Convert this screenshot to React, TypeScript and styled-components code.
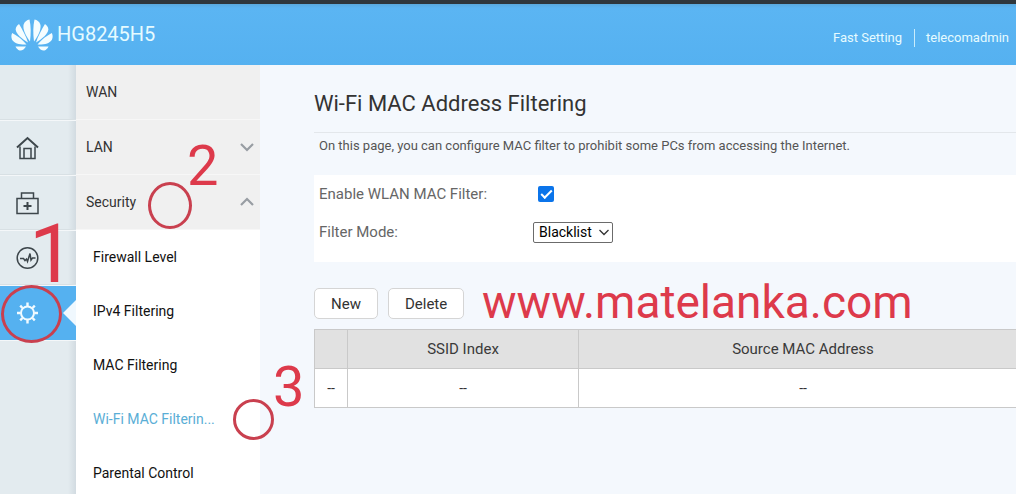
import React from 'react';
import styled, { createGlobalStyle, css } from 'styled-components';

const GlobalStyle = createGlobalStyle`
  *, *::before, *::after { box-sizing: border-box; }
  body {
    margin: 0;
    font-family: Roboto, "Liberation Sans", sans-serif;
    font-size: 14px;
    color: #333;
    background: #f4f8fd;
    overflow: hidden;
  }
  a { color: inherit; text-decoration: none; }
`;

const Page = styled.div`
  position: relative;
  display: flex;
  flex-direction: column;
  min-height: 100vh;
  overflow: hidden;
`;

const StatusStrip = styled.div`
  height: 4px;
  background: #2f373d;
`;

const Header = styled.header`
  display: flex;
  align-items: center;
  justify-content: space-between;
  height: 61px;
  padding: 0 7px 0 11px;
  color: #e6fbff;
  background: linear-gradient(#5aa9de 0, #5bb5f3 4px, #55b1f0 100%);
`;

const Brand = styled.div`
  display: flex;
  align-items: center;
  gap: 4px;
  padding-top: 2px;
  font-size: 20px;
  line-height: 24px;
`;

const BrandName = styled.span`
  padding-bottom: 4px;
`;

const UserNav = styled.nav`
  display: flex;
  align-items: center;
  font-size: 13px;
  line-height: 18px;
  padding-top: 6px;

  a + a {
    margin-left: 12px;
    padding-left: 11px;
    border-left: 1px solid #c9ecfb;
  }
`;

const Body = styled.div`
  display: flex;
  flex: 1;
`;

const Rail = styled.nav`
  flex: 0 0 76px;
  padding-top: 1px;
  background: linear-gradient(90deg, #e3ebef 0, #e3ebef 68px, #d2dbe1 76px);
`;

const RailItem = styled.a<{ $active?: boolean }>`
  display: flex;
  align-items: center;
  justify-content: space-between;
  height: 55px;
  padding-left: 16px;
  border-bottom: 1px solid #f4f7f9;
  box-shadow: inset 0 -1px 0 #d8e0e4;
  color: #3d464b;
  ${(p) =>
    p.$active &&
    css`
      color: #f2fbff;
      background: #55b1f0;
      box-shadow: none;
    `}
`;

const Pointer = styled.span`
  border: solid transparent;
  border-width: 13px 13px 13px 0;
  border-right-color: #f0f8fe;
`;

const Menu = styled.nav`
  flex: 0 0 184px;
  background: #fff;
`;

const MenuItem = styled.a`
  display: flex;
  align-items: center;
  justify-content: space-between;
  height: 55px;
  padding: 0 6px 0 10px;
  border-bottom: 1px solid #f7f7f7;
  background: #f0f0f0;
`;

const SubItem = styled.a<{ $active?: boolean }>`
  display: block;
  height: 54px;
  line-height: 54px;
  padding-left: 17px;
  color: ${(p) => (p.$active ? '#5aaed6' : '#111')};
`;

const Content = styled.main`
  flex: 1;
  min-width: 0;
  padding: 24px 0 0 54px;
`;

const Title = styled.h1`
  margin: 0;
  padding-bottom: 13px;
  border-bottom: 1px solid #e3e7eb;
  font-size: 22px;
  line-height: 30px;
  font-weight: 400;
`;

const Description = styled.p`
  margin: 0;
  padding: 4px 5px 20px;
  font-size: 13px;
  line-height: 18px;
  color: #555;
`;

const Settings = styled.form`
  height: 87px;
  padding-left: 5px;
  background: #fff;
`;

const Field = styled.div`
  display: flex;
  align-items: center;
  height: 38px;
  color: #666;
  font-size: 15px;

  label { width: 214px; }
`;

const Tick = styled.input`
  appearance: none;
  display: grid;
  place-items: center;
  width: 16px;
  height: 16px;
  margin: 0 0 0 5px;
  border-radius: 2px;
  background: #0b74ea;

  &::before {
    content: '';
    width: 11px;
    height: 6px;
    margin-bottom: 3px;
    border: solid #fff;
    border-width: 0 0 2px 2px;
    rotate: -45deg;
  }
`;

const SelectBox = styled.div`
  display: grid;
  align-items: center;

  > * { grid-area: 1 / 1; }
  svg { justify-self: end; margin-right: 4px; pointer-events: none; }
`;

const Select = styled.select`
  appearance: none;
  width: 80px;
  height: 21px;
  padding: 0 5px;
  border: 1px solid #6b6b6b;
  border-radius: 2px;
  background: #fff;
  color: #000;
  font: 14px/18px Roboto, sans-serif;
`;

const Actions = styled.div`
  display: flex;
  gap: 10px;
  padding: 26px 0 10px;
`;

const Button = styled.button`
  height: 31px;
  padding: 0 16px;
  border: 1px solid #d5d5d5;
  border-radius: 5px;
  background: #fff;
  color: #333;
  font: 15px/18px Roboto, sans-serif;
`;

const Table = styled.table`
  width: calc(100% + 12px);
  table-layout: fixed;
  border-collapse: collapse;
  text-align: center;
  font-size: 15px;

  th, td {
    height: 39px;
    padding: 0;
    border: 1px solid #c9c9c9;
  }
  th { font-weight: 400; background: #e1e1e1; color: #3a3a3a; }
  td { background: #fff; font-size: 14px; }
  th:nth-child(1) { width: 33px; }
  th:nth-child(2) { width: 231px; }
`;

const Note = styled.span<{ $x: number; $y: number; $size: number }>`
  position: absolute;
  left: ${(p) => p.$x}px;
  top: ${(p) => p.$y}px;
  font-size: ${(p) => p.$size}px;
  line-height: 1;
  white-space: nowrap;
  color: #dd3a4b;
  pointer-events: none;
`;

const Ring = styled.span<{ $x: number; $y: number; $w: number; $h: number }>`
  position: absolute;
  left: ${(p) => p.$x}px;
  top: ${(p) => p.$y}px;
  width: ${(p) => p.$w}px;
  height: ${(p) => p.$h}px;
  border: 3px solid #c9404f;
  border-radius: 50%;
  pointer-events: none;
`;

function Logo() {
  const half = (
    <>
      <path d="M19 22.500C15 17 11.800 11 12.500 6C13.200 2.500 16 1 18.500 .5C20 7 20 15 19 22.500Z" />
      <path d="M17 23.500C10.500 19.500 5 15 4.700 10.500C4.700 8 6 6.500 8 5C11 10 15 17 17 23.500Z" />
      <path d="M15.500 25.500C9 25.800 3 24.500 1 20.500C0 18 .3 16 1.200 14C6 16.500 11.500 20.500 15.500 25.500Z" />
      <path d="M15 27.500C13.500 30 11 32 8.500 31.500C7 31 5.500 29.500 4.500 27.500Z" />
    </>
  );
  return (
    <svg width="42" height="33" viewBox="0 0 42 33" fill="#f4fdff" aria-hidden="true">
      <g>{half}</g>
      <g transform="translate(42 0) scale(-1 1)">{half}</g>
    </svg>
  );
}

const Icon = ({ children }: { children: React.ReactNode }) => (
  <svg width="23" height="24" viewBox="0 0 23 24" fill="none" stroke="currentColor" strokeWidth="1.5" aria-hidden="true">
    {children}
  </svg>
);

const HomeIcon = () => (
  <Icon>
    <path d="M1 11.500 11.500 2 22 11.500" strokeWidth="2" />
    <path d="M4 10.500V22.500H19V10.500M8 22.500V12.500H15V22.500" />
  </Icon>
);

const KitIcon = () => (
  <Icon>
    <path d="M1 7.500H22V22.500H1ZM5.500 7.500V2H17.500V7.500" />
    <path d="M11.500 11V19M7.500 15H15.500" strokeWidth="2" />
  </Icon>
);

const PulseIcon = () => (
  <Icon>
    <circle cx="11.500" cy="12" r="10.300" />
    <path d="M4 12.500H7.500L9 14.500 10.500 13 11.500 15.500 14 7.500 15 14 16.500 12H19.500" />
  </Icon>
);

const GearIcon = () => (
  <Icon>
    <circle cx="11.500" cy="12" r="6.500" strokeWidth="2" />
    <path
      strokeWidth="2.400"
      d="M11.500 5V1.500M11.500 19V22.500M4.500 12H1M18.500 12H22M6.500 7 4.200 4.700M16.500 7 18.800 4.700M6.500 17 4.200 19.300M16.500 17 18.800 19.300"
    />
  </Icon>
);

const Chevron = ({ up }: { up?: boolean }) => (
  <svg width="14" height="10" viewBox="0 0 14 10" fill="none" stroke="#989da3" strokeWidth="2.200" aria-hidden="true">
    <path d={up ? 'M1 8 7 2 13 8' : 'M1 2 7 8 13 2'} />
  </svg>
);

const subItems = ['Firewall Level', 'IPv4 Filtering', 'MAC Filtering', 'Wi-Fi MAC Filterin...', 'Parental Control'];

export default function App() {
  return (
    <Page>
      <GlobalStyle />
      <StatusStrip />
      <Header>
        <Brand>
          <Logo />
          <BrandName>HG8245H5</BrandName>
        </Brand>
        <UserNav>
          <a href="#fast">Fast Setting</a>
          <a href="#user">telecomadmin</a>
        </UserNav>
      </Header>
      <Body>
        <Rail>
          <RailItem as="div" />
          <RailItem href="#home" aria-label="Home"><HomeIcon /></RailItem>
          <RailItem href="#maintain" aria-label="Maintenance"><KitIcon /></RailItem>
          <RailItem href="#diagnose" aria-label="Diagnosis"><PulseIcon /></RailItem>
          <RailItem href="#advanced" aria-label="Advanced" $active>
            <GearIcon />
            <Pointer />
          </RailItem>
        </Rail>
        <Menu>
          <MenuItem href="#wan">WAN</MenuItem>
          <MenuItem href="#lan">LAN<Chevron /></MenuItem>
          <MenuItem href="#security">Security<Chevron up /></MenuItem>
          {subItems.map((name, i) => (
            <SubItem key={name} href={`#security-${i}`} $active={i === 3}>{name}</SubItem>
          ))}
        </Menu>
        <Content>
          <Title>Wi-Fi MAC Address Filtering</Title>
          <Description>
            On this page, you can configure MAC filter to prohibit some PCs from accessing the Internet.
          </Description>
          <Settings>
            <Field>
              <label htmlFor="enable">Enable WLAN MAC Filter:</label>
              <Tick id="enable" type="checkbox" defaultChecked />
            </Field>
            <Field>
              <label htmlFor="mode">Filter Mode:</label>
              <SelectBox>
                <Select id="mode" defaultValue="Blacklist">
                  <option>Blacklist</option>
                  <option>Whitelist</option>
                </Select>
                <svg width="10" height="7" viewBox="0 0 10 7" fill="none" stroke="#333" strokeWidth="1.300" aria-hidden="true">
                  <path d="M.5 1 5 5.500 9.500 1" />
                </svg>
              </SelectBox>
            </Field>
          </Settings>
          <Actions>
            <Button type="button">New</Button>
            <Button type="button">Delete</Button>
          </Actions>
          <Table>
            <thead>
              <tr><th aria-label="Select" /><th>SSID Index</th><th>Source MAC Address</th></tr>
            </thead>
            <tbody>
              <tr><td>--</td><td>--</td><td>--</td></tr>
            </tbody>
          </Table>
        </Content>
      </Body>
      <Note $x={29} $y={213} $size={82}>1</Note>
      <Note $x={187} $y={138} $size={56}>2</Note>
      <Note $x={273} $y={359} $size={56}>3</Note>
      <Note $x={482} $y={279} $size={46}>www.matelanka.com</Note>
      <Ring $x={1} $y={285} $w={61} $h={58} />
      <Ring $x={148} $y={182} $w={44} $h={47} />
      <Ring $x={233} $y={399} $w={41} $h={41} />
    </Page>
  );
}
